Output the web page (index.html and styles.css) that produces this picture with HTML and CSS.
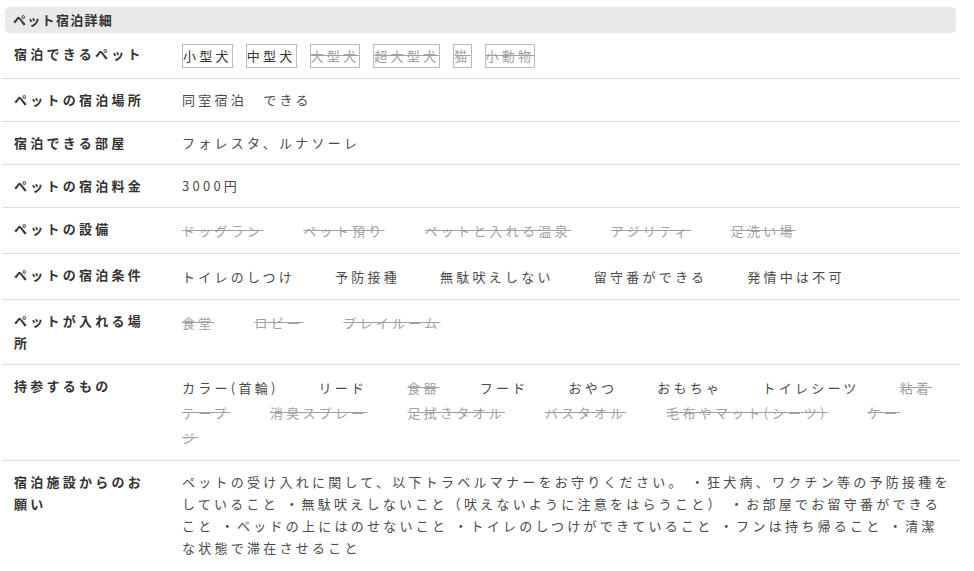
FILE: index.html
```html
<!DOCTYPE html>
<html lang="ja">
<head>
    <meta charset="UTF-8">
    <meta name="viewport" content="width=device-width, initial-scale=1.0">
    <title>ペット宿泊詳細</title>
    <link rel="stylesheet" href="styles.css">
</head>
<body>
    <section class="pet-detail">
        <h3 class="detail-title">ペット宿泊詳細</h3>
        <dl class="detail-list">
            <div class="detail-row">
                <dt>宿泊できるペット</dt>
                <dd class="tag-list">
                    <span class="tag">小型犬</span>
                    <span class="tag">中型犬</span>
                    <span class="tag off">大型犬</span>
                    <span class="tag off">超大型犬</span>
                    <span class="tag off">猫</span>
                    <span class="tag off">小動物</span>
                </dd>
            </div>
            <div class="detail-row">
                <dt>ペットの宿泊場所</dt>
                <dd>同室宿泊　できる</dd>
            </div>
            <div class="detail-row">
                <dt>宿泊できる部屋</dt>
                <dd>フォレスタ、ルナソーレ</dd>
            </div>
            <div class="detail-row">
                <dt>ペットの宿泊料金</dt>
                <dd>3000円</dd>
            </div>
            <div class="detail-row">
                <dt>ペットの設備</dt>
                <dd class="item-list"><span class="off">ドッグラン</span><span class="off">ペット預り</span><span class="off">ペットと入れる温泉</span><span class="off">アジリティ</span><span class="off">足洗い場</span></dd>
            </div>
            <div class="detail-row">
                <dt>ペットの宿泊条件</dt>
                <dd class="item-list"><span>トイレのしつけ</span><span>予防接種</span><span>無駄吠えしない</span><span>留守番ができる</span><span>発情中は不可</span></dd>
            </div>
            <div class="detail-row">
                <dt>ペットが入れる場所</dt>
                <dd class="item-list"><span class="off">食堂</span><span class="off">ロビー</span><span class="off">プレイルーム</span></dd>
            </div>
            <div class="detail-row">
                <dt>持参するもの</dt>
                <dd class="item-list"><span>カラー(首輪)</span><span>リード</span><span class="off">食器</span><span>フード</span><span>おやつ</span><span>おもちゃ</span><span>トイレシーツ</span><span class="off">粘着テープ</span><span class="off">消臭スプレー</span><span class="off">足拭きタオル</span><span class="off">バスタオル</span><span class="off">毛布やマット(シーツ)</span><span class="off">ケージ</span></dd>
            </div>
            <div class="detail-row">
                <dt>宿泊施設からのお願い</dt>
                <dd>ペットの受け入れに関して、以下トラベルマナーをお守りください。 ・狂犬病、ワクチン等の予防接種をしていること ・無駄吠えしないこと（吠えないように注意をはらうこと） ・お部屋でお留守番ができること ・ベッドの上にはのせないこと ・トイレのしつけができていること ・フンは持ち帰ること ・清潔な状態で滞在させること</dd>
            </div>
        </dl>
    </section>
</body>
</html>
```

FILE: styles.css
```css
body {
    margin: 0;
    padding: 0;
    background-color: #fff;
    color: #4a4a4a;
    font-family: "Noto Sans CJK JP", "Noto Sans", sans-serif;
    font-size: 13px;
}

.pet-detail {
    margin: 7px 14px 0 3px;
}

.detail-title {
    margin: 0 4px 0 2px;
    padding: 0 8px;
    height: 26px;
    line-height: 26px;
    background-color: #e9e9e9;
    border-radius: 5px;
    font-size: 13px;
    font-weight: bold;
    letter-spacing: 0.1em;
    color: #333;
}

.detail-list {
    margin: 0;
    padding: 0;
}

.detail-row {
    display: grid;
    grid-template-columns: 138px 1fr;
    column-gap: 30px;
    padding: 10px 7px 10px 11px;
    border-bottom: 1px dotted #c4c4c4;
    line-height: 22px;
    letter-spacing: 0.25em;
}

.detail-row:last-child {
    border-bottom: none;
}

.detail-row dt {
    font-weight: bold;
    color: #333;
}

.detail-row dd {
    margin: 0;
}

.tag-list {
    display: flex;
    flex-wrap: wrap;
    align-items: center;
    gap: 13px;
    padding-top: 1px;
}

.tag {
    border: 1px solid #bbb;
    padding: 0;
    line-height: 22px;
    color: #333;
}

.item-list {
    line-height: 25px;
    line-break: strict;
}

.item-list span {
    margin-right: 40px;
}

.off {
    color: #a0a0a0;
    text-decoration: line-through;
}

.tag.off {
    color: #a0a0a0;
}
```
